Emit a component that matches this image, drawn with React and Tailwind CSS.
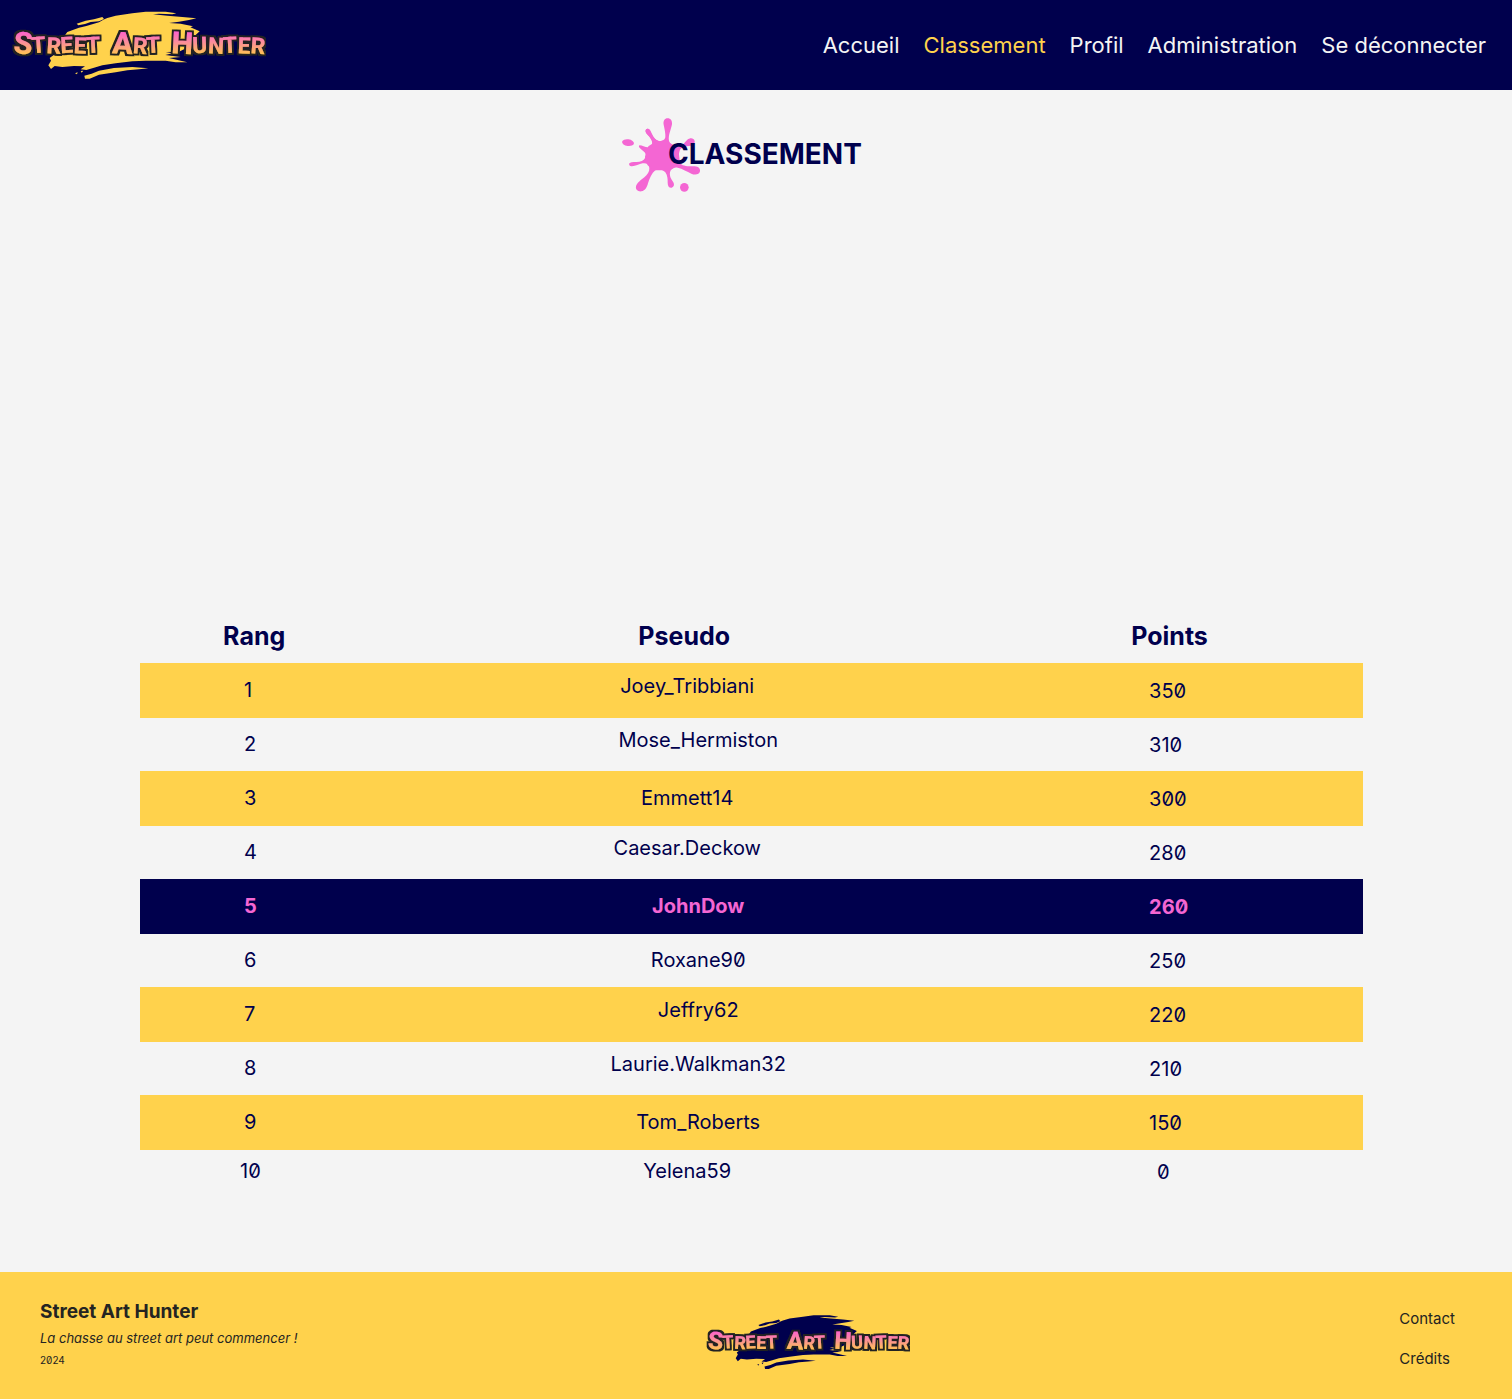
const navLinks = [
  { label: "Accueil" },
  { label: "Classement", active: true },
  { label: "Profil" },
  { label: "Administration" },
  { label: "Se déconnecter" },
];

// align: vertical placement of the name; shift: names set right of the column centre
const players = [
  { rank: 1, name: "Joey_Tribbiani", points: 350, align: "up" },
  { rank: 2, name: "Mose_Hermiston", points: 310, align: "up", shift: true },
  { rank: 3, name: "Emmett14", points: 300 },
  { rank: 4, name: "Caesar.Deckow", points: 280, align: "up" },
  { rank: 5, name: "JohnDow", points: 260, shift: true, me: true },
  { rank: 6, name: "Roxane90", points: 250, shift: true },
  { rank: 7, name: "Jeffry62", points: 220, align: "up", shift: true },
  { rank: 8, name: "Laurie.Walkman32", points: 210, align: "up", shift: true },
  { rank: 9, name: "Tom_Roberts", points: 150, shift: true },
  { rank: 10, name: "Yelena59", points: 0 },
];

const words = [
  { text: "STREET", x: 42, rotate: "4 -4 3 -3 2 -3" },
  { text: "ART", x: 338, rotate: "3 4 -3" },
  { text: "HUNTER", x: 516, rotate: "3 -2 3 -3 2 4" },
];

function Logo({ brush, id, className }) {
  return (
    <svg viewBox="33 27 768 216" className={className} role="img" aria-label="Street Art Hunter">
      <defs>
        <linearGradient id={id} gradientUnits="userSpaceOnUse" x1="0" y1="94" x2="0" y2="162">
          <stop offset="0" stopColor="#fb60cf" />
          <stop offset="0.5" stopColor="#fb8f98" />
          <stop offset="1" stopColor="#ffc155" />
        </linearGradient>
        <filter id={`${id}-outline`} x="-10%" y="-30%" width="120%" height="160%">
          <feMorphology in="SourceAlpha" operator="dilate" radius="7" result="wide" />
          <feGaussianBlur in="wide" stdDeviation="1.5" result="soft" />
          <feFlood floodColor="#242422" />
          <feComposite in2="soft" operator="in" result="outline" />
          <feMerge>
            <feMergeNode in="outline" />
            <feMergeNode in="SourceGraphic" />
          </feMerge>
        </filter>
      </defs>
      <g fill={brush}>
        <path d="M205 96 L240 83 L262 78 L300 67 L316 58 L325 54 L350 47 L400 40 L440 35 L500 35 L532 40 L520 43 L480 41 L462 43 L505 47 L550 51 L592 55 L570 60 L540 65 L510 69 L545 71 L582 79 L574 82 L602 94 L590 105 L570 140 L540 155 L500 156 L520 160 L499 165 L545 171 L510 174 L565 187 L530 187 L500 182 L440 182 L400 184 L350 190 L310 196 L285 203 L262 210 L245 208 L258 199 L225 198 L190 201 L167 198 L156 207 L148 196 L156 182 L152 174 L168 162 L180 130 Z" />
        <path d="M233 71 L260 62 L285 58 L310 51 L315 57 L300 64 L275 66 L258 72 L238 76 Z" />
        <path d="M256 227 L278 221 L300 212 L345 204 L400 201 L448 205 L420 208 L385 211 L350 217 L300 224 L272 236 L258 236 Z" />
        <path d="M228 220 L236 217 L234 223 Z M245 213 L253 212 L248 218 Z" />
      </g>
      <g
        fontFamily="Roboto, sans-serif"
        fontWeight="800"
        fill={`url(#${id})`}
        filter={`url(#${id}-outline)`}
      >
        {words.map((word) => (
          <text key={word.text} x={word.x} y="160" rotate={word.rotate}>
            <tspan fontSize="92">{word.text[0]}</tspan>
            <tspan fontSize="68">{word.text.slice(1)}</tspan>
          </text>
        ))}
      </g>
    </svg>
  );
}

function Splat() {
  return (
    <svg viewBox="18 20 240 225" className="h-[75px] w-20 shrink-0" fill="#f466d3" aria-hidden="true">
      <path d="M158 24 C149 24 144 32 146 43 C149 57 152 70 151 81 C149 90 140 94 132 92 C121 89 115 82 109 71 C105 62 106 55 97 55 C91 56 90 63 94 69 C101 77 111 86 112 96 C112 106 107 111 99 111 C90 111 81 105 74 105 C69 107 73 113 80 118 C88 124 93 128 92 136 C91 146 84 152 73 154 C61 155 51 154 44 158 C40 162 44 168 51 168 C62 167 72 162 83 159 C94 157 102 163 103 173 C104 184 97 193 88 201 C78 209 66 217 63 228 C61 239 69 244 79 243 C91 241 96 231 99 219 C104 203 110 189 121 180 C130 175 144 177 151 186 C158 196 158 207 158 217 C158 227 162 233 170 232 C177 230 179 223 175 216 C169 207 163 198 165 186 C167 175 177 170 188 172 C203 175 216 184 229 190 C240 195 253 193 255 183 C257 172 246 168 235 168 C220 168 203 167 197 160 C190 150 190 127 196 117 C202 110 211 108 222 107 C233 106 240 101 239 92 C237 82 225 81 217 88 C209 96 203 106 192 109 C179 111 165 102 162 91 C159 76 168 58 171 42 C172 31 167 24 158 24 Z" />
      <path d="M97 55 C104 54 107 61 110 69 C116 82 122 90 132 93 L150 90 L190 112 L195 162 L165 180 L120 180 L98 165 L90 140 L100 108 L112 100 C112 86 99 76 94 69 C90 62 91 56 97 55 Z" />
      <ellipse cx="39" cy="97" rx="18" ry="10" transform="rotate(8 39 97)" />
      <circle cx="208" cy="231" r="13" />
    </svg>
  );
}

function Row({ player }) {
  const { rank, name, points, align, shift, me } = player;
  const last = rank === 10;
  const tone = me
    ? "bg-[#00004d] font-bold text-[#f466d3]"
    : rank % 2
      ? "bg-[#ffd24c]"
      : "";
  const height = last ? "h-11" : rank % 2 ? "h-[55px]" : "h-[53px]";
  return (
    <tr className={`${tone} ${height}`}>
      <td className={`pb-0.5 ${last ? "pl-[100px]" : "pl-[104px]"}`}>{rank}</td>
      <td className={`text-center ${align === "up" ? "pb-2.5" : "pb-0.5"} ${shift ? "pl-7" : "pl-1.5"}`}>{name}</td>
      <td className={last ? "pl-[161px]" : "pl-[153px]"}>{points}</td>
    </tr>
  );
}

export default function App() {
  return (
    <div className="flex min-h-screen flex-col bg-[#f4f4f4] font-['Inter',sans-serif] text-[#00004d] slashed-zero">
      <header className="flex h-[90px] items-center justify-between bg-[#00004d] pr-[26px] pl-2.5">
        <a href="#accueil">
          <Logo brush="#ffd24c" id="logo-header" className="h-[72px] w-64" />
        </a>
        <nav className="flex gap-6 text-[22px] leading-8">
          {navLinks.map((link) => (
            <a
              key={link.label}
              href="#page"
              aria-current={link.active ? "page" : undefined}
              className={link.active ? "text-[#ffd24c]" : "text-[#f4f4f4]"}
            >
              {link.label}
            </a>
          ))}
        </nav>
      </header>

      <main className="grow pt-[27px]">
        <div className="flex items-center justify-center pr-[29px]">
          <Splat />
          <h1 className="relative -ml-[33px] pb-0.5 text-[28px] font-bold">CLASSEMENT</h1>
        </div>

        <div className="mt-[418px] mr-[149px] mb-[76px] ml-[140px]">
          <table className="w-full table-fixed text-left text-[20px] leading-7">
            <colgroup>
              <col className="w-[19%]" />
              <col className="w-[51%]" />
              <col />
            </colgroup>
            <thead>
              <tr className="h-[53px] text-center text-[25px]">
                <th scope="col" className="pr-1 pb-0.5 font-bold">Rang</th>
                <th scope="col" className="pb-0.5 font-bold">Pseudo</th>
                <th scope="col" className="pr-5 pb-0.5 font-bold">Points</th>
              </tr>
            </thead>
            <tbody>
              {players.map((player) => (
                <Row key={player.rank} player={player} />
              ))}
            </tbody>
          </table>
        </div>
      </main>

      <footer className="flex h-[127px] items-center bg-[#ffd24c] pr-[57px] pb-1 pl-10 text-[#242422]">
        <div className="w-[47%]">
          <p className="text-[19px] leading-7 font-bold">Street Art Hunter</p>
          <p className="text-[13px] leading-6 italic">La chasse au street art peut commencer !</p>
          <p className="text-[10px] leading-5">2024</p>
        </div>
        <Logo brush="#00004d" id="logo-footer" className="mt-4 h-[58px] w-[205px]" />
        <nav className="mt-2.5 ml-auto flex flex-col gap-4 text-[15px] leading-6">
          <a href="#contact">Contact</a>
          <a href="#credits">Crédits</a>
        </nav>
      </footer>
    </div>
  );
}
